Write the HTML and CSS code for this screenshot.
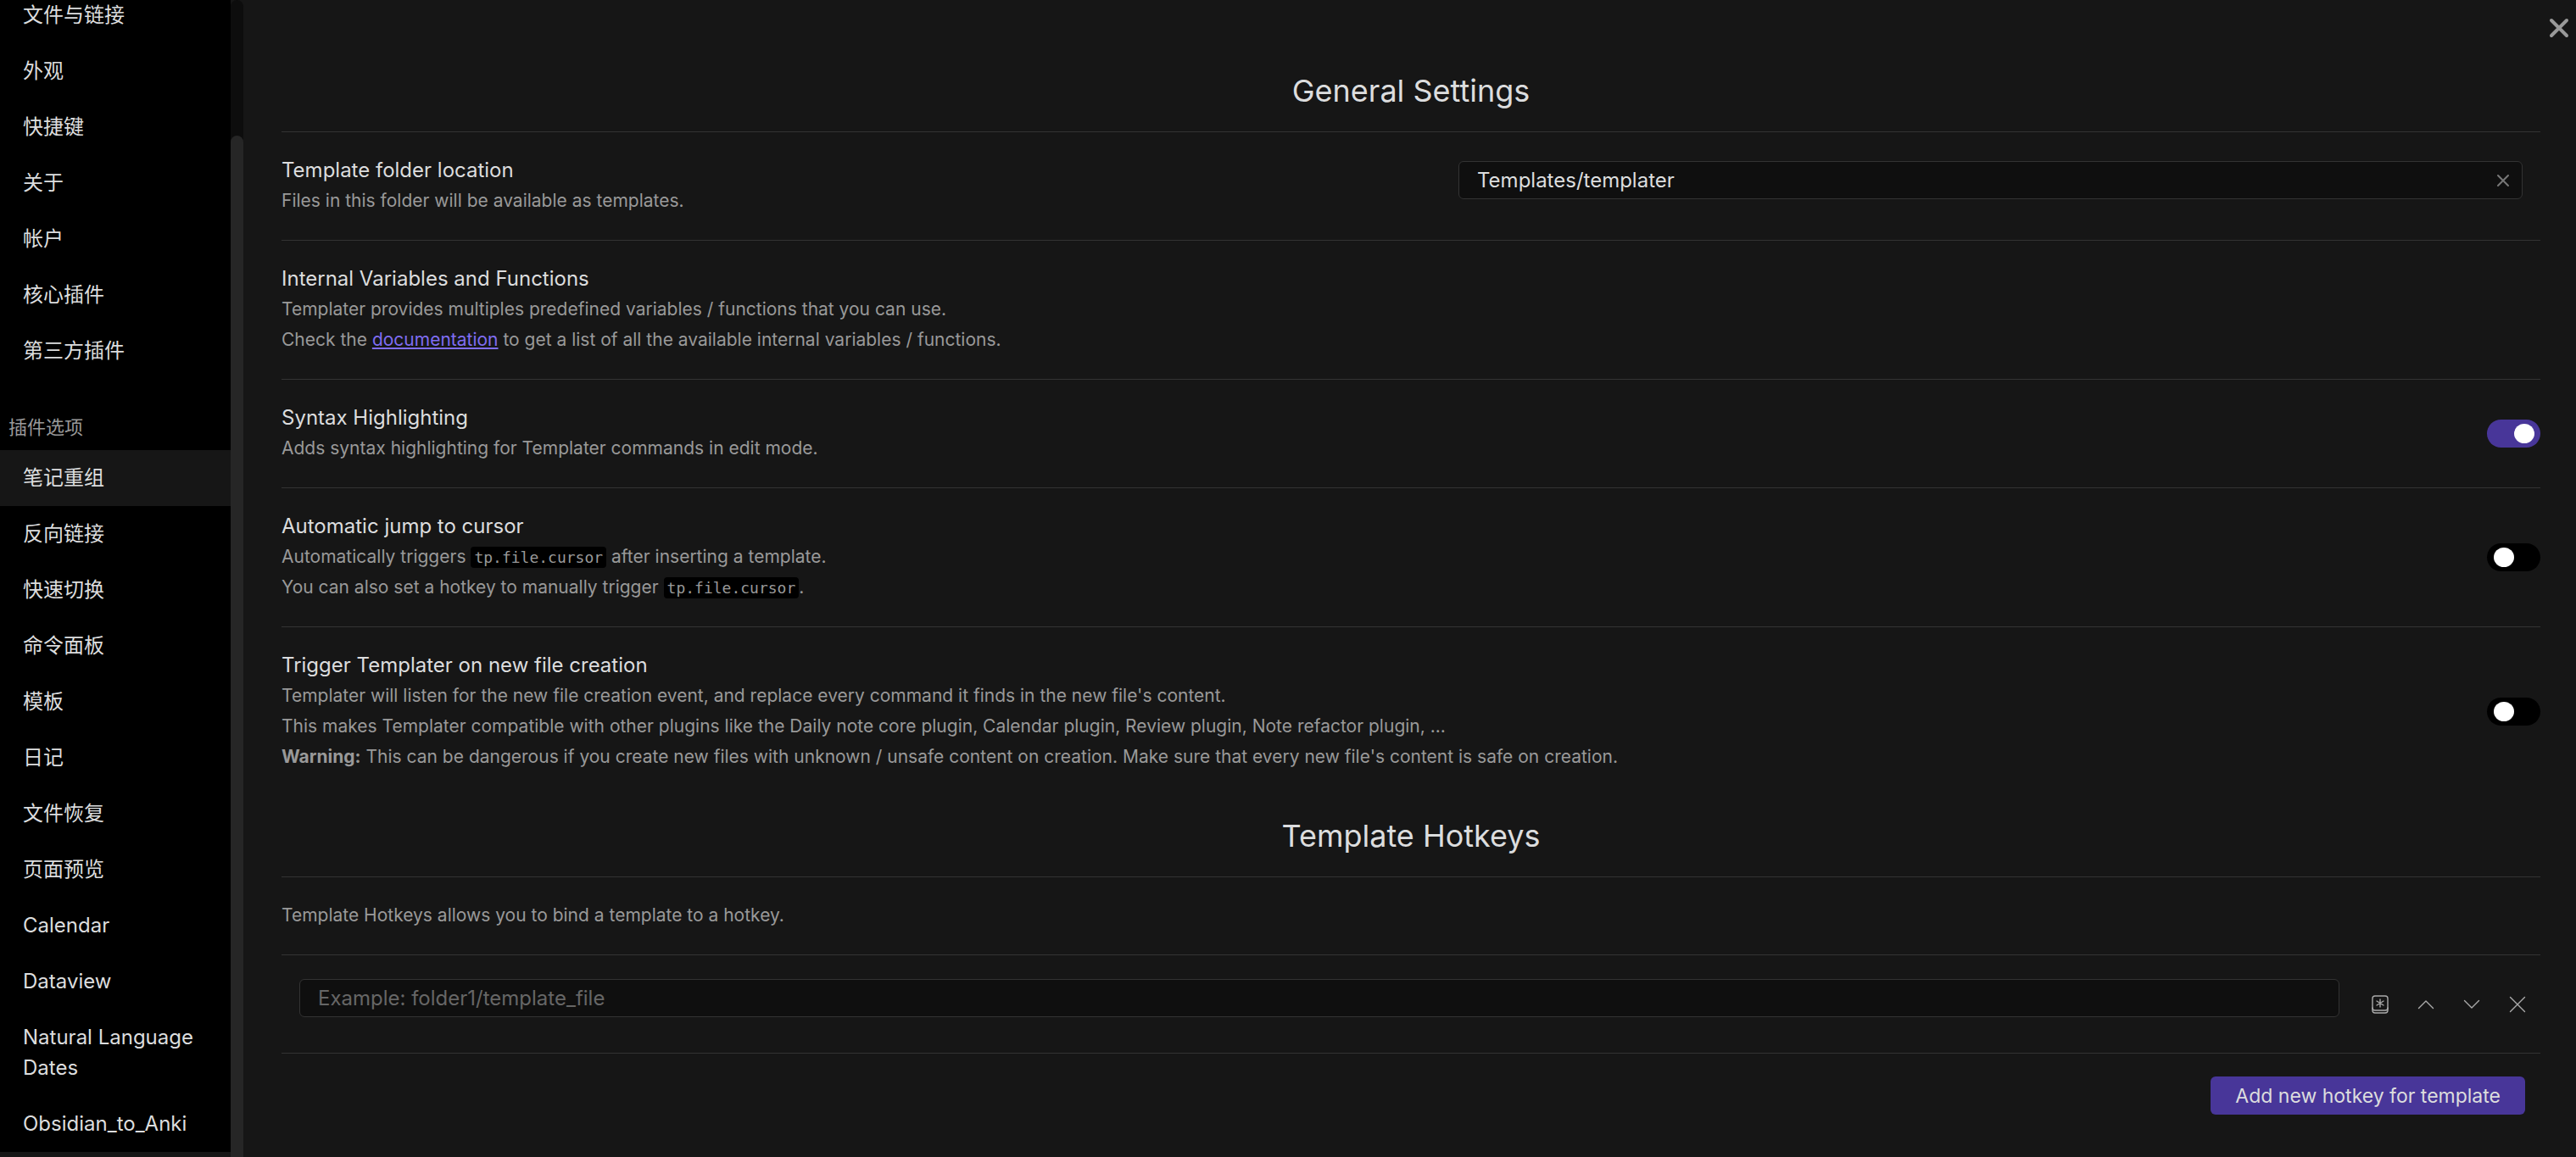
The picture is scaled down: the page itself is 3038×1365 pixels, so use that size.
FILE: index.html
```
<!DOCTYPE html>
<html lang="zh-CN">
<head>
<meta charset="utf-8">
<meta name="viewport" content="width=device-width, initial-scale=1">
<title>Templater</title>
<link rel="stylesheet" href="styles.css">
</head>
<body>
<div class="settings">
  <nav class="sidebar">
    <div class="sidebar-list">
      <a class="nav-item" href="#">文件与链接</a>
      <a class="nav-item" href="#">外观</a>
      <a class="nav-item" href="#">快捷键</a>
      <a class="nav-item" href="#">关于</a>
      <a class="nav-item" href="#">帐户</a>
      <a class="nav-item" href="#">核心插件</a>
      <a class="nav-item" href="#">第三方插件</a>
      <div class="nav-title">插件选项</div>
      <a class="nav-item active" href="#">笔记重组</a>
      <a class="nav-item" href="#">反向链接</a>
      <a class="nav-item" href="#">快速切换</a>
      <a class="nav-item" href="#">命令面板</a>
      <a class="nav-item" href="#">模板</a>
      <a class="nav-item" href="#">日记</a>
      <a class="nav-item" href="#">文件恢复</a>
      <a class="nav-item" href="#">页面预览</a>
      <a class="nav-item" href="#">Calendar</a>
      <a class="nav-item" href="#">Dataview</a>
      <a class="nav-item" href="#">Natural Language Dates</a>
      <a class="nav-item" href="#">Obsidian_to_Anki</a>
    </div>
  </nav>
  <div class="scroll-track"><div class="scroll-thumb"></div></div>

  <main class="content">
    <button class="close" type="button" aria-label="Close">
      <svg width="24" height="24" viewBox="0 0 24 24"><path d="M3 3 21 21M21 3 3 21"/></svg>
    </button>

    <h2>General Settings</h2>

    <section class="item">
      <div class="info">
        <label class="name" for="folder">Template folder location</label>
        <div class="desc">Files in this folder will be available as templates.</div>
      </div>
      <div class="control wide">
        <div class="search">
          <input class="field" id="folder" type="text" value="Templates/templater">
          <button class="clear" type="button" aria-label="Clear">
            <svg width="18" height="18" viewBox="0 0 18 18"><path d="M3 3 15 15M15 3 3 15"/></svg>
          </button>
        </div>
      </div>
    </section>

    <section class="item">
      <div class="info">
        <div class="name">Internal Variables and Functions</div>
        <div class="desc">Templater provides multiples predefined variables / functions that you can use.<br>Check the <a href="#">documentation</a> to get a list of all the available internal variables / functions.</div>
      </div>
    </section>

    <section class="item">
      <div class="info">
        <label class="name" for="syntax">Syntax Highlighting</label>
        <div class="desc">Adds syntax highlighting for Templater commands in edit mode.</div>
      </div>
      <input class="toggle" id="syntax" type="checkbox" checked>
    </section>

    <section class="item">
      <div class="info">
        <label class="name" for="jump">Automatic jump to cursor</label>
        <div class="desc">Automatically triggers <code>tp.file.cursor</code> after inserting a template.<br>You can also set a hotkey to manually trigger <code>tp.file.cursor</code>.</div>
      </div>
      <input class="toggle" id="jump" type="checkbox">
    </section>

    <section class="item">
      <div class="info">
        <label class="name" for="trigger">Trigger Templater on new file creation</label>
        <div class="desc">Templater will listen for the new file creation event, and replace every command it finds in the new file's content.<br>This makes Templater compatible with other plugins like the Daily note core plugin, Calendar plugin, Review plugin, Note refactor plugin, ...<br><strong>Warning:</strong> This can be dangerous if you create new files with unknown / unsafe content on creation. Make sure that every new file's content is safe on creation.</div>
      </div>
      <input class="toggle" id="trigger" type="checkbox">
    </section>

    <h2>Template Hotkeys</h2>

    <section class="item">
      <div class="desc">Template Hotkeys allows you to bind a template to a hotkey.</div>
    </section>

    <section class="item hotkey">
      <input class="field" type="text" placeholder="Example: folder1/template_file" aria-label="Template file">
      <div class="actions">
        <button class="icon" type="button" aria-label="Configure hotkey">
          <svg width="24" height="24" viewBox="0 0 24 24"><rect x="3" y="2" width="18" height="17" rx="3"/><path d="M3 16v3a3 3 0 0 0 3 3h12a3 3 0 0 0 3-3v-3M12 6v9M8 8l8 5M16 8l-8 5"/></svg>
        </button>
        <button class="icon" type="button" aria-label="Move up">
          <svg width="24" height="24" viewBox="0 0 24 24"><path d="M3.500 16.500 12 8 20.500 16.500"/></svg>
        </button>
        <button class="icon" type="button" aria-label="Move down">
          <svg width="24" height="24" viewBox="0 0 24 24"><path d="M3.500 7.500 12 16 20.500 7.500"/></svg>
        </button>
        <button class="icon" type="button" aria-label="Delete">
          <svg width="24" height="24" viewBox="0 0 24 24"><path d="M3.500 3.500 20.500 20.500M20.500 3.500 3.500 20.500"/></svg>
        </button>
      </div>
    </section>

    <section class="item add">
      <button class="primary" type="button">Add new hotkey for template</button>
    </section>
  </main>
</div>
</body>
</html>
```
FILE: styles.css
```
* {
  box-sizing: border-box;
}

body {
  margin: 0;
  background: #161616;
  color: #dcddde;
  font: 24px/36px Inter, "Noto Sans CJK SC", sans-serif;
}

button,
input {
  margin: 0;
  font: inherit;
  color: inherit;
}

button {
  border: 0;
  background: none;
  cursor: pointer;
}

svg {
  display: block;
  fill: none;
  stroke: currentColor;
  stroke-linecap: round;
  stroke-linejoin: round;
}

.settings {
  display: flex;
  height: 100vh;
  overflow: hidden;
}

/* Sidebar */

.sidebar {
  flex: 0 0 272px;
  overflow: hidden;
}

/* The list is scrolled part of the way into its first entry. */
.sidebar-list {
  margin-top: -15px;
  background: #000;
}

.nav-item {
  display: block;
  padding: 15px 27px;
  color: #dcddde;
  text-decoration: none;
}

.nav-item.active {
  background: #161616;
}

.nav-title {
  padding: 39px 10px 9px;
  color: #999;
  font-size: 22px;
}

.scroll-track {
  flex: 0 0 15px;
  padding-top: 160px;
  border-radius: 8px 8px 0 0;
  background: #0d0d0d;
}

.scroll-thumb {
  height: 100%;
  border-radius: 8px 8px 0 0;
  background: #262626;
}

/* Settings page */

.content {
  position: relative;
  flex: 1;
  min-width: 0;
  padding: 60px 42px 45px 45px;
}

.close {
  position: absolute;
  top: 21px;
  right: 8px;
  padding: 0;
  color: #999;
}

.close svg {
  stroke-width: 4;
}

h2 {
  margin: 0;
  padding: 20px 0;
  font-size: 36px;
  font-weight: 400;
  line-height: 55px;
  text-align: center;
}

.item {
  display: flex;
  align-items: center;
  padding: 27px 0 28px;
  border-top: 1px solid #333;
}

.info {
  flex: 1;
  min-width: 0;
}

.name {
  display: block;
}

.desc {
  color: #999;
  font-size: 21px;
}

.desc a {
  color: #7f6df2;
}

code {
  padding: 2px 4px;
  border-radius: 4px;
  background: #000;
  font: 18px/20px "DejaVu Sans Mono", monospace;
}

.control.wide {
  flex: 0 0 50%;
  align-self: flex-start;
  padding: 7px 21px 0 56px;
}

.search {
  position: relative;
}

.field {
  display: block;
  width: 100%;
  height: 45px;
  padding: 0 21px;
  border: 1px solid #333;
  border-radius: 6px;
  background: #0f0f0f;
}

.field::placeholder {
  color: #666;
  opacity: 1;
}

.clear {
  position: absolute;
  top: 14px;
  right: 14px;
  padding: 0;
  color: #777;
}

.clear svg {
  stroke-width: 2;
}

.toggle {
  appearance: none;
  flex: none;
  display: flex;
  align-items: center;
  width: 63px;
  height: 33px;
  padding: 0 7px 0 8px;
  border-radius: 17px;
  background: #000;
}

.toggle::before {
  content: "";
  width: 24px;
  height: 23px;
  border-radius: 50%;
  background: #fff;
}

.toggle:checked {
  justify-content: flex-end;
  background: #483699;
}

.hotkey {
  gap: 36px;
  padding: 28px 15px 42px 21px;
}

.actions {
  display: flex;
  gap: 30px;
  padding-top: 15px;
}

.icon {
  padding: 0;
  color: #aaa;
}

.icon svg {
  stroke-width: 1.4;
}

.add {
  justify-content: flex-end;
  padding: 27px 18px;
}

.primary {
  height: 45px;
  padding: 0 29px;
  border-radius: 6px;
  background: #483699;
  font-size: 23px;
}
```
